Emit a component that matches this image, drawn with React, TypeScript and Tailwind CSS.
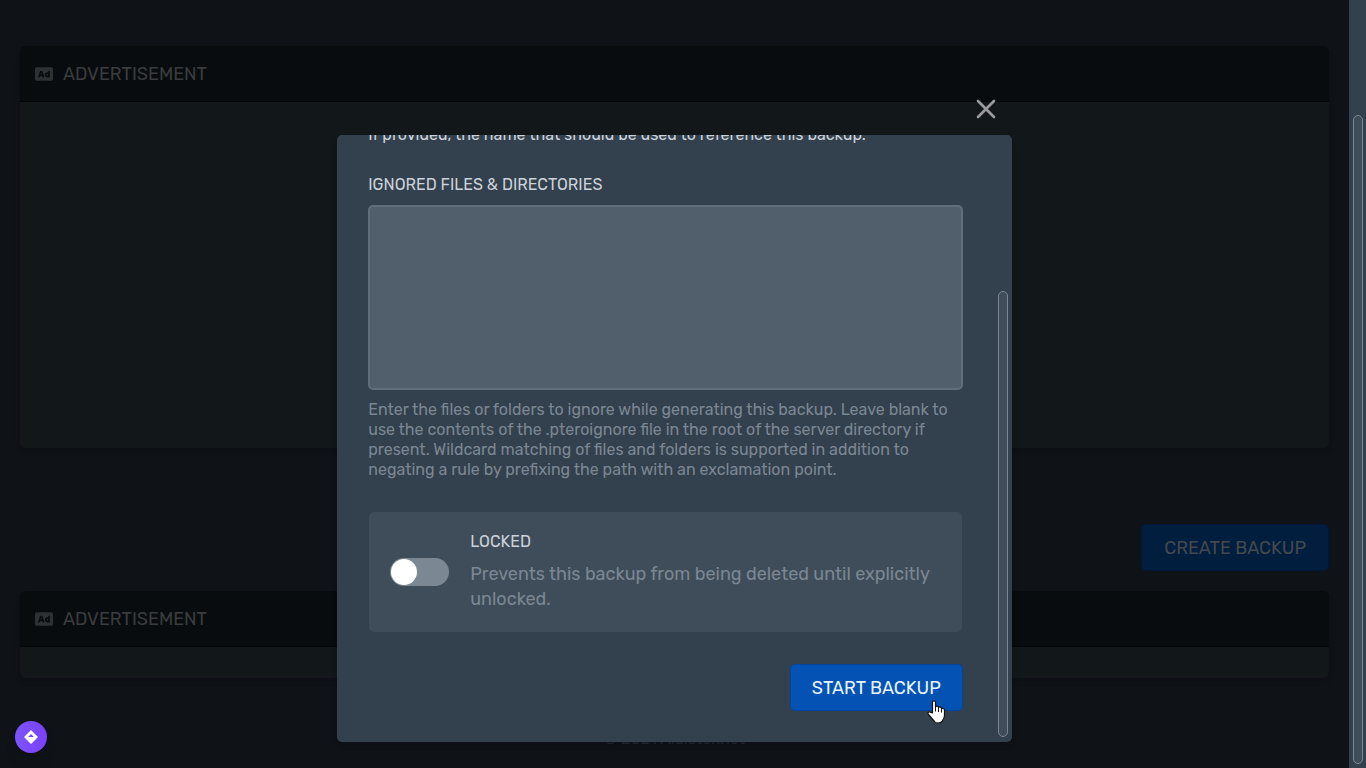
import React from 'react';
import { FaAd } from 'react-icons/fa';

const text = "font-['Rubik','Inter','Noto_Sans',sans-serif]";

function AdCard({ bodyClass }: { bodyClass: string }) {
  return (
    <section className="overflow-hidden rounded-md bg-[#12171a] shadow-md">
      <header className="flex h-14 items-center gap-[10px] border-b border-[#030506] bg-[#080c0e] px-[15px] text-[#3a3c3e]">
        <FaAd size={18} className="text-[#2e3134]" />
        <h2 className="text-[18px] leading-6">ADVERTISEMENT</h2>
      </header>
      <div className={bodyClass} />
    </section>
  );
}

function Thumb({ className }: { className: string }) {
  return (
    <div className={'w-[10px] rounded-[5px] border border-[#7b8793] bg-[#3f4d5a] ' + className} />
  );
}

function BackupDialog() {
  return (
    <div role="dialog" aria-modal="true" aria-label="Create backup" className="relative flex h-full w-1/2 flex-col">
      <button type="button" aria-label="Close" className="absolute -top-[42px] right-[10px] text-[#9a9b9d]">
        <svg width="32" height="32" viewBox="0 0 24 24" fill="none" stroke="currentColor" strokeWidth="2" strokeLinecap="round">
          <path d="M6 18L18 6M6 6l12 12" />
        </svg>
      </button>
      <div className="flex min-h-0 flex-1 rounded-[5px] bg-[#33404d] shadow-md">
        <form className="flex h-full min-w-0 flex-1 flex-col justify-end overflow-hidden pr-[35px] pb-[31px] pl-[31px]">
          <p className="shrink-0 text-[16px] leading-5 text-[#cbd2d9]">
            If provided, the name that should be used to reference this backup.
          </p>
          <label htmlFor="ignored" className="mt-[30px] shrink-0 text-[16px] leading-5 text-[#cbd2d9]">
            IGNORED FILES &amp; DIRECTORIES
          </label>
          <textarea
            id="ignored"
            className="mt-[10px] block h-[185px] w-full shrink-0 resize-none rounded-[5px] border-2 border-[#606d7b] bg-[#515f6c] p-3 text-[#cbd2d9] outline-none"
          />
          <p className="mt-[10px] shrink-0 text-[16px] leading-5 text-[#7b8793]">
            Enter the files or folders to ignore while generating this backup. Leave blank to use the contents of the
            .pteroignore file in the root of the server directory if present. Wildcard matching of files and folders is
            supported in addition to negating a rule by prefixing the path with an exclamation point.
          </p>
          <div className="mx-px mt-8 flex shrink-0 items-center rounded-[5px] bg-[#3f4d5a] px-[21px] py-5">
            <input
              id="locked"
              type="checkbox"
              role="switch"
              className="relative h-7 w-[59px] shrink-0 appearance-none rounded-full bg-[#7b8793] before:absolute before:top-px before:left-px before:size-[26px] before:rounded-full before:bg-white before:content-['']"
            />
            <div className="ml-[21px] min-w-0 flex-1">
              <label htmlFor="locked" className="block text-[16px] leading-5 text-[#cbd2d9]">
                LOCKED
              </label>
              <p className="mt-[10px] text-[18px] leading-[25px] text-[#7b8793]">
                Prevents this backup from being deleted until explicitly unlocked.
              </p>
            </div>
          </div>
          <div className="mt-8 flex shrink-0 justify-end">
            <button
              type="submit"
              className="h-[47px] rounded-[5px] border border-[#03449e] bg-[#0552b5] px-[21px] text-[18px] leading-6 text-[#e6f6ff]"
            >
              START BACKUP
            </button>
          </div>
        </form>
        <div className="flex w-[14px] flex-col pt-[156px] pb-[5px]">
          <Thumb className="flex-1" />
        </div>
      </div>
    </div>
  );
}

export default function App() {
  return (
    <div className={'relative flex h-screen overflow-hidden bg-[#0f1317] ' + text}>
      <main className="flex min-w-0 flex-1 flex-col px-5 pt-[46px]">
        <AdCard bodyClass="h-[346px]" />
        <div className="mt-[76px] flex justify-end">
          <button
            type="button"
            className="h-[47px] rounded-[5px] border border-[#01183a] bg-[#011e3e] px-[22px] text-[18px] leading-6 text-[#43494d]"
          >
            CREATE BACKUP
          </button>
        </div>
        <div className="mt-5">
          <AdCard bodyClass="h-[31px]" />
        </div>
        <footer className="mt-[51px] text-center text-[16px] leading-5 text-[#22282d]">© 2021 Alaister.net</footer>
      </main>
      <div className="flex w-[17px] flex-col items-center bg-[#33404d] pt-[115px] pb-1">
        <Thumb className="flex-1" />
      </div>
      <div className="absolute inset-y-0 right-[17px] left-0 flex justify-center pt-[135px] pb-[26px]">
        <BackupDialog />
      </div>
      <button
        type="button"
        aria-label="Privacy settings"
        className="absolute bottom-[15px] left-[15px] flex size-8 items-center justify-center rounded-full bg-linear-to-r from-[#7c54ff] to-[#7b3ff8] shadow-lg"
      >
        <svg width="14" height="14" viewBox="0 0 14 14">
          <path fill="#fff" fillRule="evenodd" d="M7 0l7 7-7 7-7-7zM7 4L4 7h6z" />
        </svg>
      </button>
      <svg className="pointer-events-none absolute top-[700px] left-[927px]" width="19" height="24" viewBox="0 0 19 24">
        <path
          fill="#fff"
          stroke="#111"
          strokeWidth="1.2"
          strokeLinejoin="round"
          d="M5.5 13V2.2C5.5.4 8.5.4 8.5 2.200V7C9 5.800 11.500 6 11.500 7.500C12.300 6.500 14.500 7 14.500 8.500C15.500 7.800 17.500 8.500 17.500 10V15.500C17.500 18 16 20 15 21.500C13 23.500 9 23.500 7.500 21.500L1.500 14.500C0 12.500 2 11.200 3.500 12.200Z"
        />
        <path stroke="#111" strokeWidth="1" d="M8.500 7v4.500M11.500 8v4M14.500 9v3.500" />
      </svg>
    </div>
  );
}
